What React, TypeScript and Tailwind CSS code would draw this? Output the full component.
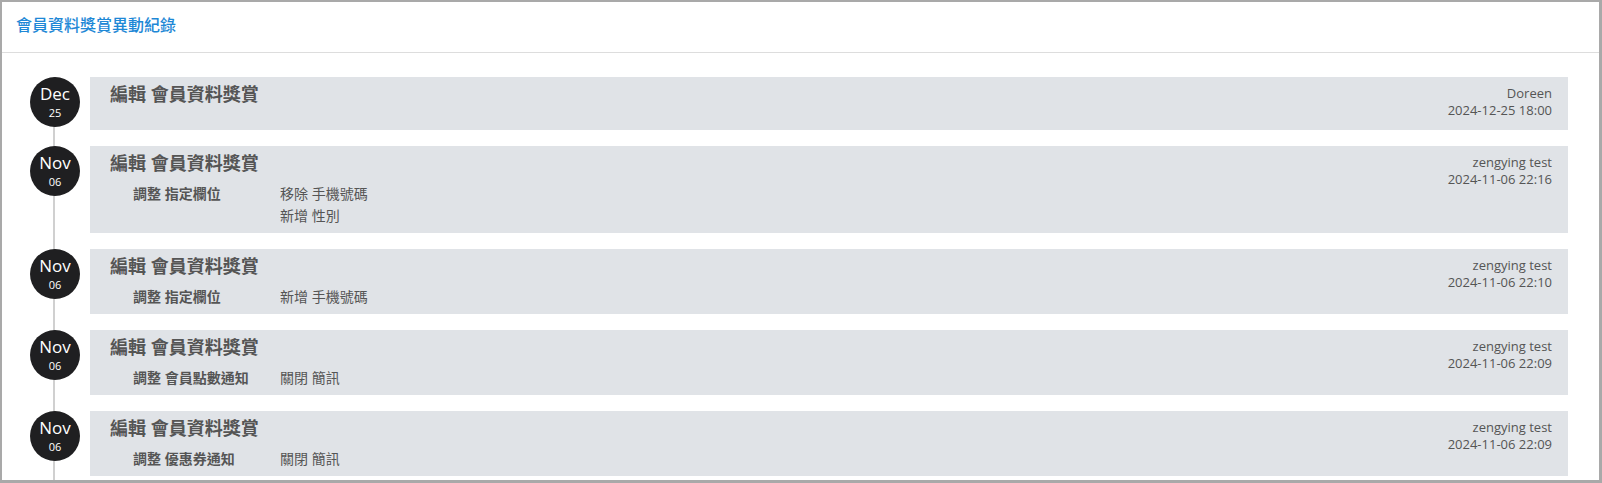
import React from 'react';

interface Change {
  label: string;
  values: string[];
}

interface LogEntry {
  month: string;
  day: string;
  title: string;
  user: string;
  time: string;
  changes: Change[];
}

const logs: LogEntry[] = [
  { month: 'Dec', day: '25', title: '編輯 會員資料獎賞', user: 'Doreen', time: '2024-12-25 18:00', changes: [] },
  {
    month: 'Nov',
    day: '06',
    title: '編輯 會員資料獎賞',
    user: 'zengying test',
    time: '2024-11-06 22:16',
    changes: [{ label: '調整 指定欄位', values: ['移除 手機號碼', '新增 性別'] }],
  },
  {
    month: 'Nov',
    day: '06',
    title: '編輯 會員資料獎賞',
    user: 'zengying test',
    time: '2024-11-06 22:10',
    changes: [{ label: '調整 指定欄位', values: ['新增 手機號碼'] }],
  },
  {
    month: 'Nov',
    day: '06',
    title: '編輯 會員資料獎賞',
    user: 'zengying test',
    time: '2024-11-06 22:09',
    changes: [{ label: '調整 會員點數通知', values: ['關閉 簡訊'] }],
  },
  {
    month: 'Nov',
    day: '06',
    title: '編輯 會員資料獎賞',
    user: 'zengying test',
    time: '2024-11-06 22:09',
    changes: [{ label: '調整 優惠券通知', values: ['關閉 簡訊'] }],
  },
];

const DateBadge: React.FC<{ month: string; day: string }> = ({ month, day }) => (
  <div className="relative z-10 w-[50px] h-[50px] shrink-0 rounded-full bg-[#1f1f21] text-white flex flex-col items-center pt-[6px]">
    <span className="text-[17px] leading-[21px]">{month}</span>
    <span className="text-[11px] leading-[14px] mt-[2px]">{day}</span>
  </div>
);

const LogCard: React.FC<{ log: LogEntry }> = ({ log }) => (
  <div className="flex-1 flex justify-between items-start bg-[#e0e3e7] text-[#555]">
    <div className="pl-5 pt-[6px] pb-[6px]">
      <h3 className="text-[18px] leading-[22px] font-bold">{log.title}</h3>
      {log.changes.map((change, i) => (
        <div key={i} className="flex pl-[23px] mt-[9px] text-[14px] leading-[22px]">
          <div className="w-[147px] font-bold">{change.label}</div>
          <div>
            {change.values.map((v, j) => (
              <div key={j}>{v}</div>
            ))}
          </div>
        </div>
      ))}
    </div>
    <div className="text-right text-[13px] leading-[17px] pr-4 pt-[8px] pb-[11px]">
      <div>{log.user}</div>
      <div>{log.time}</div>
    </div>
  </div>
);

export default function App() {
  return (
    <div className="h-[483px] w-full overflow-hidden bg-white border-l-2 border-t-2 border-r-[3px] border-b-[3px] border-[#a9a9a9] flex flex-col font-['Open_Sans','Noto_Sans_CJK_TC',sans-serif]">
      <div className="h-[51px] shrink-0 border-b border-[#dddddd] pl-[14px] flex items-center pb-[4px]">
        <h2 className="text-[16px] font-medium text-[#1e88d6]">會員資料獎賞異動紀錄</h2>
      </div>
      <div className="flex-1 overflow-hidden pl-[28px] pr-[31px] pt-[24px]">
        <div className="relative">
          <div className="absolute left-[23px] top-0 -bottom-10 w-[2px] bg-[#d0d0d0]" />
          {logs.map((log, i) => (
            <div key={i} className="flex gap-[10px] mb-4">
              <DateBadge month={log.month} day={log.day} />
              <LogCard log={log} />
            </div>
          ))}
        </div>
      </div>
    </div>
  );
}
